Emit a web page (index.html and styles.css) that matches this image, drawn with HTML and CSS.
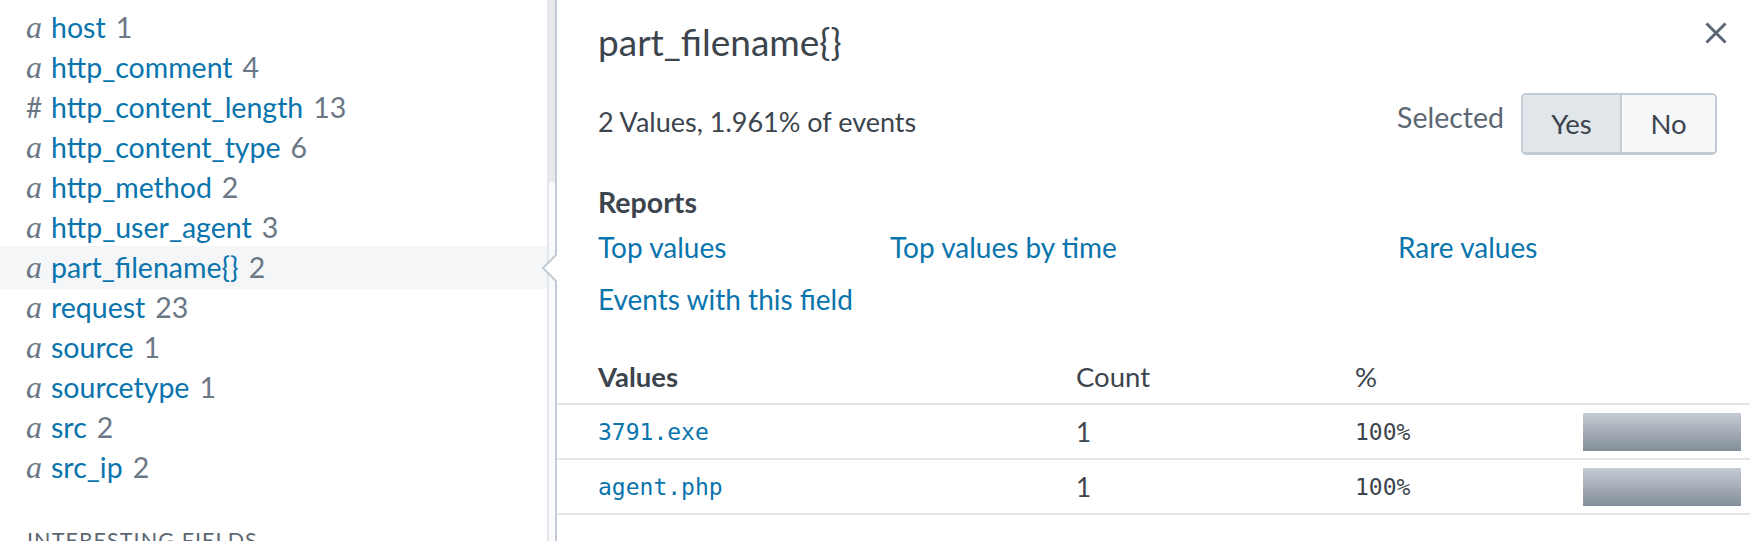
FILE: index.html
```html
<!DOCTYPE html>
<html lang="en">
<head>
<meta charset="utf-8">
<title>Field summary</title>
<link rel="stylesheet" href="styles.css">
</head>
<body>
<div class="app">
  <aside class="fields">
    <ul class="field-list">
      <li class="field"><span class="type">a</span><span class="name">host</span><span class="count">1</span></li>
      <li class="field"><span class="type">a</span><span class="name">http_comment</span><span class="count">4</span></li>
      <li class="field"><span class="type num">#</span><span class="name">http_content_length</span><span class="count">13</span></li>
      <li class="field"><span class="type">a</span><span class="name">http_content_type</span><span class="count">6</span></li>
      <li class="field"><span class="type">a</span><span class="name">http_method</span><span class="count">2</span></li>
      <li class="field"><span class="type">a</span><span class="name">http_user_agent</span><span class="count">3</span></li>
      <li class="field selected"><span class="type">a</span><span class="name">part_filename{}</span><span class="count">2</span></li>
      <li class="field"><span class="type">a</span><span class="name">request</span><span class="count">23</span></li>
      <li class="field"><span class="type">a</span><span class="name">source</span><span class="count">1</span></li>
      <li class="field"><span class="type">a</span><span class="name">sourcetype</span><span class="count">1</span></li>
      <li class="field"><span class="type">a</span><span class="name">src</span><span class="count">2</span></li>
      <li class="field"><span class="type">a</span><span class="name">src_ip</span><span class="count">2</span></li>
    </ul>
    <div class="section-title">INTERESTING FIELDS</div>
  </aside>
  <div class="scrollbar"><div class="thumb"></div></div>
  <section class="popover">
    <svg class="arrow" width="16" height="30" viewBox="0 0 16 30"><path d="M16 0 L2 15 L16 30 Z" fill="#fff"/><path d="M16 1 L2 15 L16 29" fill="none" stroke="#c3cbd4" stroke-width="2"/></svg>
    <header class="pop-head">
      <h2 class="pop-title">part_filename{}</h2>
      <button class="close" aria-label="Close"><svg width="24" height="24" viewBox="0 0 24 24"><path d="M2.5 2.5 L21.5 21.5 M21.5 2.5 L2.5 21.5" stroke="#5c6773" stroke-width="3" fill="none"/></svg></button>
    </header>
    <div class="stats">
      <div class="summary">2 Values, 1.961% of events</div>
      <div class="selected-ctl">
        <span class="sel-label">Selected</span>
        <div class="toggle"><button class="seg seg-yes active">Yes</button><button class="seg seg-no">No</button></div>
      </div>
    </div>
    <h3 class="reports-title">Reports</h3>
    <div class="reports">
      <a class="link">Top values</a>
      <a class="link">Top values by time</a>
      <a class="link">Rare values</a>
      <a class="link">Events with this field</a>
    </div>
    <div class="vtable">
      <div class="vrow vhead"><span class="c1 strong">Values</span><span>Count</span><span>%</span><span></span></div>
      <div class="vrow"><span class="c1 mono link">3791.exe</span><span class="cnt">1</span><span class="mono">100%</span><span class="bar" style="width:158px"></span></div>
      <div class="vrow"><span class="c1 mono link">agent.php</span><span class="cnt">1</span><span class="mono">100%</span><span class="bar" style="width:158px"></span></div>
    </div>
  </section>
</div>
</body>
</html>
```
FILE: styles.css
```css
html, body {
  margin: 0;
  padding: 0;
  background: #fff;
}
body {
  font-family: Lato, "Open Sans", sans-serif;
  color: #3c444d;
  width: 1750px;
  height: 541px;
  overflow: hidden;
}
.app {
  display: flex;
  height: 541px;
  overflow: hidden;
}
/* left field list */
.fields {
  width: 547px;
  flex: none;
  padding-top: 7px;
  box-sizing: border-box;
}
.field-list {
  list-style: none;
  margin: 0;
  padding: 0;
}
.field {
  height: 40px;
  line-height: 40px;
  display: flex;
  align-items: baseline;
  padding-left: 26px;
  font-size: 28.5px;
  white-space: nowrap;
}
.field.selected {
  background: #f5f6f8;
  margin: -1px 0 -2px;
  padding-top: 1px;
  padding-bottom: 2px;
}
.type {
  width: 25px;
  flex: none;
  font-family: "Liberation Serif", serif;
  font-style: italic;
  font-size: 32px;
  color: #6b7785;
}
.type.num {
  font-family: Lato, sans-serif;
  font-style: normal;
  font-size: 28px;
}
.name {
  color: #0a74ad;
}
.count {
  color: #6b7785;
  margin-left: 10px;
}
.section-title {
  margin-top: 41px;
  padding-left: 27px;
  font-size: 21.5px;
  line-height: 24px;
  letter-spacing: 1.1px;
  color: #5c6773;
}
/* scrollbar */
.scrollbar {
  width: 6px;
  flex: none;
  border-left: 2px solid #e3e6ea;
  background: #f9fafb;
}
.thumb {
  height: 182px;
  background: #e6e8eb;
}
/* popover */
.popover {
  flex: 1;
  position: relative;
  border-left: 2px solid #c3cbd4;
  background: #fff;
}
.arrow {
  position: absolute;
  left: -16px;
  top: 253px;
}
.pop-head {
  display: flex;
  justify-content: space-between;
  align-items: flex-start;
  padding: 22px 22px 0 41px;
}
.pop-title {
  margin: 0;
  font-size: 37px;
  line-height: 40px;
  font-weight: 400;
  color: #3c444d;
}
.close {
  border: 0;
  background: none;
  padding: 0;
  width: 24px;
  height: 24px;
  margin-top: -1px;
}
.close svg { display: block; }
.stats {
  display: flex;
  justify-content: space-between;
  align-items: center;
  height: 62px;
  margin-top: 31px;
  padding: 0 33px 0 41px;
}
.summary {
  font-size: 27px;
  margin-bottom: 6px;
}
.selected-ctl {
  display: flex;
  align-items: center;
  gap: 17px;
}
.sel-label {
  font-size: 28.5px;
  color: #5c6773;
  margin-bottom: 14px;
}
.toggle {
  display: flex;
  border: 2px solid #c3cbd4;
  border-bottom-width: 3px;
  border-radius: 5px;
  overflow: hidden;
  height: 57px;
}
.seg {
  border: 0;
  margin: 0;
  padding: 0;
  font-family: inherit;
  font-size: 27.5px;
  color: #3c444d;
  background: #f7f8fa;
}
.seg-yes {
  width: 99px;
  border-right: 2px solid #c3cbd4;
}
.seg-yes.active { background: #e1e6eb; }
.seg-no { width: 93px; }
.reports-title {
  margin: 32px 0 0;
  padding-left: 41px;
  font-size: 28.5px;
  line-height: 30px;
  font-weight: 700;
  color: #3c444d;
}
.reports {
  display: grid;
  grid-template-columns: 292px 508px auto;
  grid-auto-rows: 52px;
  align-items: center;
  margin-top: 4px;
  padding-left: 41px;
}
.link {
  color: #0a74ad;
  font-size: 28px;
  text-decoration: none;
}
.vtable {
  margin-top: 25px;
}
.vrow {
  display: grid;
  grid-template-columns: 519px 279px 228px 1fr;
  align-items: center;
  height: 53px;
  border-bottom: 2px solid #e1e6eb;
  font-size: 27.5px;
}
.c1 { padding-left: 41px; }
.strong { font-weight: 700; }
.cnt { font-size: 26px; }
.mono {
  font-family: "DejaVu Sans Mono", "Liberation Mono", monospace;
  font-size: 23px;
}
.vrow .mono.link { font-size: 23px; }
.bar {
  display: block;
  height: 38px;
  background: linear-gradient(#c5cbd3, #838e9a);
}
```
